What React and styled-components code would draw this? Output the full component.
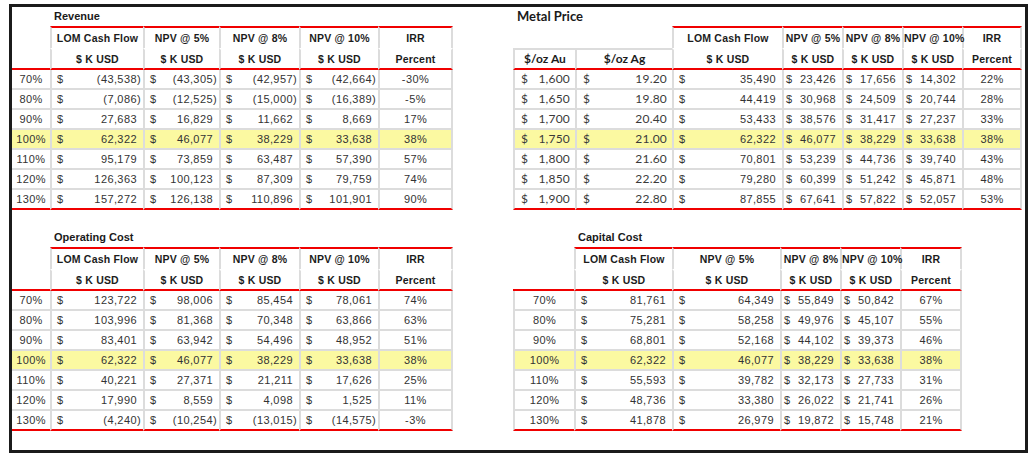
import React from 'react'
import styled, { createGlobalStyle } from 'styled-components'

const RED = '#f00000'
const GRID = '#dcdcdc'
const YELLOW = '#fbf9a1'
const CALIBRI = '"Lato", "Liberation Sans", sans-serif'

const GlobalStyle = createGlobalStyle`
  html, body { margin: 0; padding: 0; background: #fff; }
  body { font-family: "Liberation Sans", Arial, sans-serif; color: #333; }
`

const Frame = styled.main`
  box-sizing: border-box;
  width: 1019px;
  height: 449px;
  margin: 4px 0 0 9px;
  border: 3px solid #1b1b1b;
  display: grid;
  grid-template-columns: 441px 509px;
  grid-auto-rows: 203px;
  column-gap: 60px;
  row-gap: 18px;
  align-content: start;
`

const Panel = styled.section`
  display: flex;
  flex-direction: column;
`

const Title = styled.h2`
  margin: 0;
  height: 19px;
  line-height: 19px;
  padding-left: ${p => p.$indent}px;
  font-family: ${p => (p.$calibri ? CALIBRI : 'inherit')};
  font-size: ${p => (p.$calibri ? '13px' : '11px')};
  font-weight: bold;
  color: #1a1a1a;
`

const Table = styled.table`
  border-collapse: separate;
  border-spacing: 0;
  table-layout: fixed;
  width: ${p => p.$width}px;
  font-size: 11px;
  letter-spacing: 0.4px;
`

const Head = styled.th`
  padding: 0;
  font-weight: bold;
  font-size: ${p => (p.$calibri ? '12px' : '10.5px')};
  font-family: ${p => (p.$calibri ? CALIBRI : 'inherit')};
  letter-spacing: ${p => (p.$calibri ? '0' : '0.2px')};
  color: #1c1c1c;
  text-align: center;
  white-space: nowrap;
  line-height: ${p => (p.$row === 1 ? 20 : 18)}px;
  border-top: 2px solid ${p => p.$top || 'transparent'};
  border-bottom: ${p => (p.$row === 2 ? `2px solid ${RED}` : 'none')};
  border-left: ${p => (p.$left ? `2px solid ${GRID}` : 'none')};
  border-right: ${p => (p.$right ? `2px solid ${GRID}` : 'none')};
`

const Row = styled.tr`
  background: ${p => (p.$hl ? YELLOW : 'transparent')};
`

const Cell = styled.td`
  padding: 0;
  line-height: 18px;
  white-space: nowrap;
  overflow: hidden;
  border-bottom: 2px solid ${p => (p.$last ? RED : GRID)};
  border-left: ${p => (p.$left ? `2px solid ${GRID}` : 'none')};
  border-right: ${p => (p.$right ? `2px solid ${GRID}` : 'none')};
`

const LabelCell = styled(Cell)`
  text-align: center;
`

const MoneyCell = styled(Cell)`
  text-align: right;
  padding-left: ${p => (p.$tight ? 2 : 5)}px;
  padding-right: 2px;
`

const PriceCell = styled(Cell)`
  text-align: right;
  font-family: ${CALIBRI};
  font-size: 12px;
  letter-spacing: 0.2px;
  color: #3a3a3a;
  padding-left: 6px;
  padding-right: 5px;
`

const Cur = styled.span`
  float: left;
`

const Paren = styled.span`
  visibility: ${p => (p.$show ? 'visible' : 'hidden')};
`

const Money = ({ value, tight, last }) => {
  const neg = value < 0
  return (
    <MoneyCell $tight={tight} $last={last} $left>
      <Cur>$</Cur>
      {neg ? '(' : ''}
      {Math.abs(value).toLocaleString('en-US')}
      <Paren $show={neg}>)</Paren>
    </MoneyCell>
  )
}

const HEADS = ['LOM Cash Flow', 'NPV @ 5%', 'NPV @ 8%', 'NPV @ 10%', 'IRR']
const UNITS = ['$ K USD', '$ K USD', '$ K USD', '$ K USD', 'Percent']

const Sensitivity = ({ t }) => {
  const leadCount = t.priceHeads ? 2 : 1
  return (
    <Panel>
      <Title $indent={t.indent} $calibri={t.calibriTitle}>{t.title}</Title>
      <Table $width={t.widths.reduce((a, b) => a + b, 0)}>
        <colgroup>
          {t.widths.map((w, i) => <col key={i} style={{ width: w }} />)}
        </colgroup>
        <thead>
          <tr>
            {Array.from({ length: leadCount }).map((_, i) => <Head key={'b' + i} $row={1} />)}
            {HEADS.map((h, i) => (
              <Head key={h} $row={1} $top={RED} $left $right={i === HEADS.length - 1}>{h}</Head>
            ))}
          </tr>
          <tr>
            {t.priceHeads
              ? t.priceHeads.map(h => (
                  <Head key={h} $row={2} $top={GRID} $left $calibri>{h}</Head>
                ))
              : <Head $row={2} />}
            {UNITS.map((u, i) => (
              <Head key={i} $row={2} $left $right={i === UNITS.length - 1}>{u}</Head>
            ))}
          </tr>
        </thead>
        <tbody>
          {t.rows.map((r, ri) => {
            const last = ri === t.rows.length - 1
            return (
              <Row key={ri} $hl={r.hl}>
                {t.priceHeads
                  ? r.lead.map((p, i) => (
                      <PriceCell key={i} $left $last={last}><Cur>$</Cur>{p}</PriceCell>
                    ))
                  : <LabelCell $left={t.edge} $last={last}>{r.lead[0]}</LabelCell>}
                {r.vals.map((v, i) => (
                  <Money key={i} value={v} tight={t.tight[i]} last={last} />
                ))}
                <LabelCell $left $right $last={last}>{r.irr}</LabelCell>
              </Row>
            )
          })}
        </tbody>
      </Table>
    </Panel>
  )
}

const pct = ['70%', '80%', '90%', '100%', '110%', '120%', '130%']
const mk = (lead, vals) =>
  vals.map((v, i) => ({ lead: lead[i], vals: v.slice(0, 4), irr: v[4], hl: i === 3 }))

const revenue = {
  title: 'Revenue',
  indent: 42,
  widths: [38, 93, 76, 80, 79, 75],
  tight: [false, false, false, false],
  rows: mk(pct.map(p => [p]), [
    [-43538, -43305, -42957, -42664, '-30%'],
    [-7086, -12525, -15000, -16389, '-5%'],
    [27683, 16829, 11662, 8669, '17%'],
    [62322, 46077, 38229, 33638, '38%'],
    [95179, 73859, 63487, 57390, '57%'],
    [126363, 100123, 87309, 79759, '74%'],
    [157272, 126138, 110896, 101901, '90%'],
  ]),
}

const metal = {
  title: 'Metal Price',
  indent: 4,
  calibriTitle: true,
  priceHeads: ['$/oz Au', '$/oz Ag'],
  widths: [62, 97, 110, 60, 60, 60, 60],
  tight: [false, true, true, true],
  rows: mk(
    [
      ['1,600', '19.20'],
      ['1,650', '19.80'],
      ['1,700', '20.40'],
      ['1,750', '21.00'],
      ['1,800', '21.60'],
      ['1,850', '22.20'],
      ['1,900', '22.80'],
    ],
    [
      [35490, 23426, 17656, 14302, '22%'],
      [44419, 30968, 24509, 20744, '28%'],
      [53433, 38576, 31417, 27237, '33%'],
      [62322, 46077, 38229, 33638, '38%'],
      [70801, 53239, 44736, 39740, '43%'],
      [79280, 60399, 51242, 45871, '48%'],
      [87855, 67641, 57822, 52057, '53%'],
    ]
  ),
}

const operating = {
  title: 'Operating Cost',
  indent: 42,
  widths: [38, 93, 76, 80, 79, 75],
  tight: [false, false, false, false],
  rows: mk(pct.map(p => [p]), [
    [123722, 98006, 85454, 78061, '74%'],
    [103996, 81368, 70348, 63866, '63%'],
    [83401, 63942, 54496, 48952, '51%'],
    [62322, 46077, 38229, 33638, '38%'],
    [40221, 27371, 21211, 17626, '25%'],
    [17990, 8559, 4098, 1525, '11%'],
    [-4240, -10254, -13015, -14575, '-3%'],
  ]),
}

const capital = {
  title: 'Capital Cost',
  indent: 65,
  edge: true,
  widths: [61, 98, 108, 60, 60, 62],
  tight: [false, false, true, true],
  rows: mk(pct.map(p => [p]), [
    [81761, 64349, 55849, 50842, '67%'],
    [75281, 58258, 49976, 45107, '55%'],
    [68801, 52168, 44102, 39373, '46%'],
    [62322, 46077, 38229, 33638, '38%'],
    [55593, 39782, 32173, 27733, '31%'],
    [48736, 33380, 26022, 21741, '26%'],
    [41878, 26979, 19872, 15748, '21%'],
  ]),
}

export default function App() {
  return (
    <>
      <GlobalStyle />
      <Frame>
        <Sensitivity t={revenue} />
        <Sensitivity t={metal} />
        <Sensitivity t={operating} />
        <Sensitivity t={capital} />
      </Frame>
    </>
  )
}
